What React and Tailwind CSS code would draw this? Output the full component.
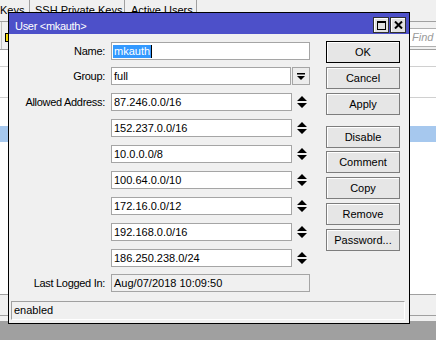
import React from "react";

function UpDown() {
  return (
    <svg width="10" height="12" viewBox="0 0 10 12">
      <path d="M5 0L10 5H0Z M0 7H10L5 12Z" fill="#000" />
    </svg>
  );
}

function DropIcon() {
  return (
    <svg width="8" height="7" viewBox="0 0 8 7">
      <rect x="0" y="0" width="8" height="1.5" fill="#000" />
      <path d="M0 3H8L4 7Z" fill="#000" />
    </svg>
  );
}

function Btn({ children, className, def }) {
  return (
    <div
      className={`w-[74px] h-[22px] flex items-center justify-center border bg-[#e6e6e6] shadow-[inset_1px_1px_0_#ffffff] ${
        def ? "border-black" : "border-[#7d7d7d]"
      } ${className}`}
    >
      {children}
    </div>
  );
}

function Row({ label, children, className }) {
  return (
    <div className={`flex items-center h-[18px] ${className}`}>
      <div className="w-[96px] text-right whitespace-nowrap text-black tracking-[-0.3px]">{label}</div>
      <div className="ml-[6px] flex h-[18px]">{children}</div>
    </div>
  );
}

export default function App() {
  const addrs = [
    "87.246.0.0/16",
    "152.237.0.0/16",
    "10.0.0.0/8",
    "100.64.0.0/10",
    "172.16.0.0/12",
    "192.168.0.0/16",
    "186.250.238.0/24",
  ];
  return (
    <div className="relative w-[436px] h-[340px] overflow-hidden bg-[#a0a0a0] font-['Liberation_Sans',Arial,sans-serif] text-[11px] leading-[13px] text-black">
      {/* background window */}
      <div className="h-[321px] bg-[#f0f0f0] flex flex-col">
        <div className="h-[22px] flex border-b border-[#a0a0a0] shrink-0">
          <div className="w-[30px] border-r border-[#a0a0a0] pt-[4px] whitespace-nowrap overflow-hidden">Keys</div>
          <div className="w-[95px] border-r border-[#a0a0a0] pt-[4px] pl-[5px] whitespace-nowrap">SSH Private Keys</div>
          <div className="w-[72px] border-r border-[#a0a0a0] pt-[4px] pl-[6px] whitespace-nowrap">Active Users</div>
        </div>
        <div className="h-[27px] flex shrink-0 border-l border-[#c0c0c0] ml-[1px]">
          <div className="ml-[3px] mt-[11px] w-[10px] h-[9px] bg-[#f5d90a] border border-black" />
          <div className="ml-auto mt-[6px] w-[40px] h-[19px] -mr-[12px] bg-white border border-[#b0b0b0] pl-[3px] flex items-center italic text-[#9a9a9a]">
            Find
          </div>
        </div>
        <div className="flex-1 bg-white border-t border-[#a0a0a0] flex flex-col">
          <div className="h-[17px] border-b border-[#d0d0d0] shrink-0" />
          <div className="h-[31px] border-b border-[#d0d0d0] shrink-0" />
          <div className="h-[28px] shrink-0" />
          <div className="h-[16px] bg-[#a6c8ee] shrink-0" />
          <div className="flex-1" />
        </div>
        <div className="h-[27px] border-t border-[#a0a0a0] shrink-0">
          <div className="h-[21px] border-b border-[#a0a0a0]" />
        </div>
      </div>

      {/* dialog */}
      <div className="absolute left-[8px] top-[12px] w-[402px] h-[312px] border border-black bg-[#f0f0f0] flex flex-col">
        <div className="h-[21px] bg-[#4d50c9] flex shrink-0">
          <div className="pl-[6px] pt-[7px] text-white whitespace-nowrap tracking-[-0.3px]">User &lt;mkauth&gt;</div>
          <div className="ml-auto mt-[4px] mr-[3px] flex gap-[1px]">
            <div className="w-[16px] h-[16px] border border-[#303030] bg-[#e1e1e1] shadow-[inset_1px_1px_0_#ffffff] flex items-center justify-center">
              <div className="w-[9px] h-[9px] border border-black border-t-2" />
            </div>
            <div className="w-[16px] h-[16px] border border-[#303030] bg-[#e1e1e1] shadow-[inset_1px_1px_0_#ffffff] flex items-center justify-center">
              <svg width="9" height="8" viewBox="0 0 9 8">
                <path d="M1 0.5L8 7.5M8 0.5L1 7.5" stroke="#000" strokeWidth="2" />
              </svg>
            </div>
          </div>
        </div>

        <div className="flex-1 flex items-start">
          <div className="w-[301px] flex flex-col">
            <Row label="Name:" className="mt-[8px]">
              <div className="w-[199px] h-[18px] border border-[#a5a5a5] bg-white pl-[1px] flex items-center">
                <span className="bg-[#3399ff] text-white h-[13px] leading-[13px] pl-[1px] pr-[1px]">mkauth</span>
                <span className="w-[1px] h-[13px] bg-black" />
              </div>
            </Row>
            <Row label="Group:" className="mt-[7px]">
              <div className="w-[180px] h-[18px] border border-[#a5a5a5] bg-white pl-[2px] flex items-center">full</div>
              <div className="ml-[1px] w-[18px] h-[18px] border border-[#a5a5a5] bg-[#ececec] flex items-center justify-center">
                <DropIcon />
              </div>
            </Row>
            {addrs.map((a, i) => (
              <Row key={a} label={i === 0 ? "Allowed Address:" : ""} className="mt-[8px]">
                <div className="w-[181px] h-[18px] border border-[#a5a5a5] bg-white pl-[2px] flex items-center">{a}</div>
                <div className="w-[18px] h-[18px] flex items-center justify-center pl-[1px]">
                  <UpDown />
                </div>
              </Row>
            ))}
            <Row label="Last Logged In:" className="mt-[7px]">
              <div className="w-[199px] h-[18px] border border-[#a5a5a5] bg-[#f0f0f0] pl-[2px] flex items-center">
                Aug/07/2018 10:09:50
              </div>
            </Row>
          </div>
          <div className="ml-[16px] flex flex-col">
            <Btn def className="mt-[7px]">OK</Btn>
            <Btn className="mt-[4px]">Cancel</Btn>
            <Btn className="mt-[4px]">Apply</Btn>
            <Btn className="mt-[11px]">Disable</Btn>
            <Btn className="mt-[3px]">Comment</Btn>
            <Btn className="mt-[4px]">Copy</Btn>
            <Btn className="mt-[4px]">Remove</Btn>
            <Btn className="mt-[4px]">Password...</Btn>
          </div>
        </div>

        <div className="mx-[2px] mr-[4px] mb-[3px] h-[19px] border-t border-l border-[#a0a0a0] border-r-white border-b-white border-r border-b pl-[2px] flex items-center shrink-0">
          enabled
        </div>
      </div>
    </div>
  );
}
